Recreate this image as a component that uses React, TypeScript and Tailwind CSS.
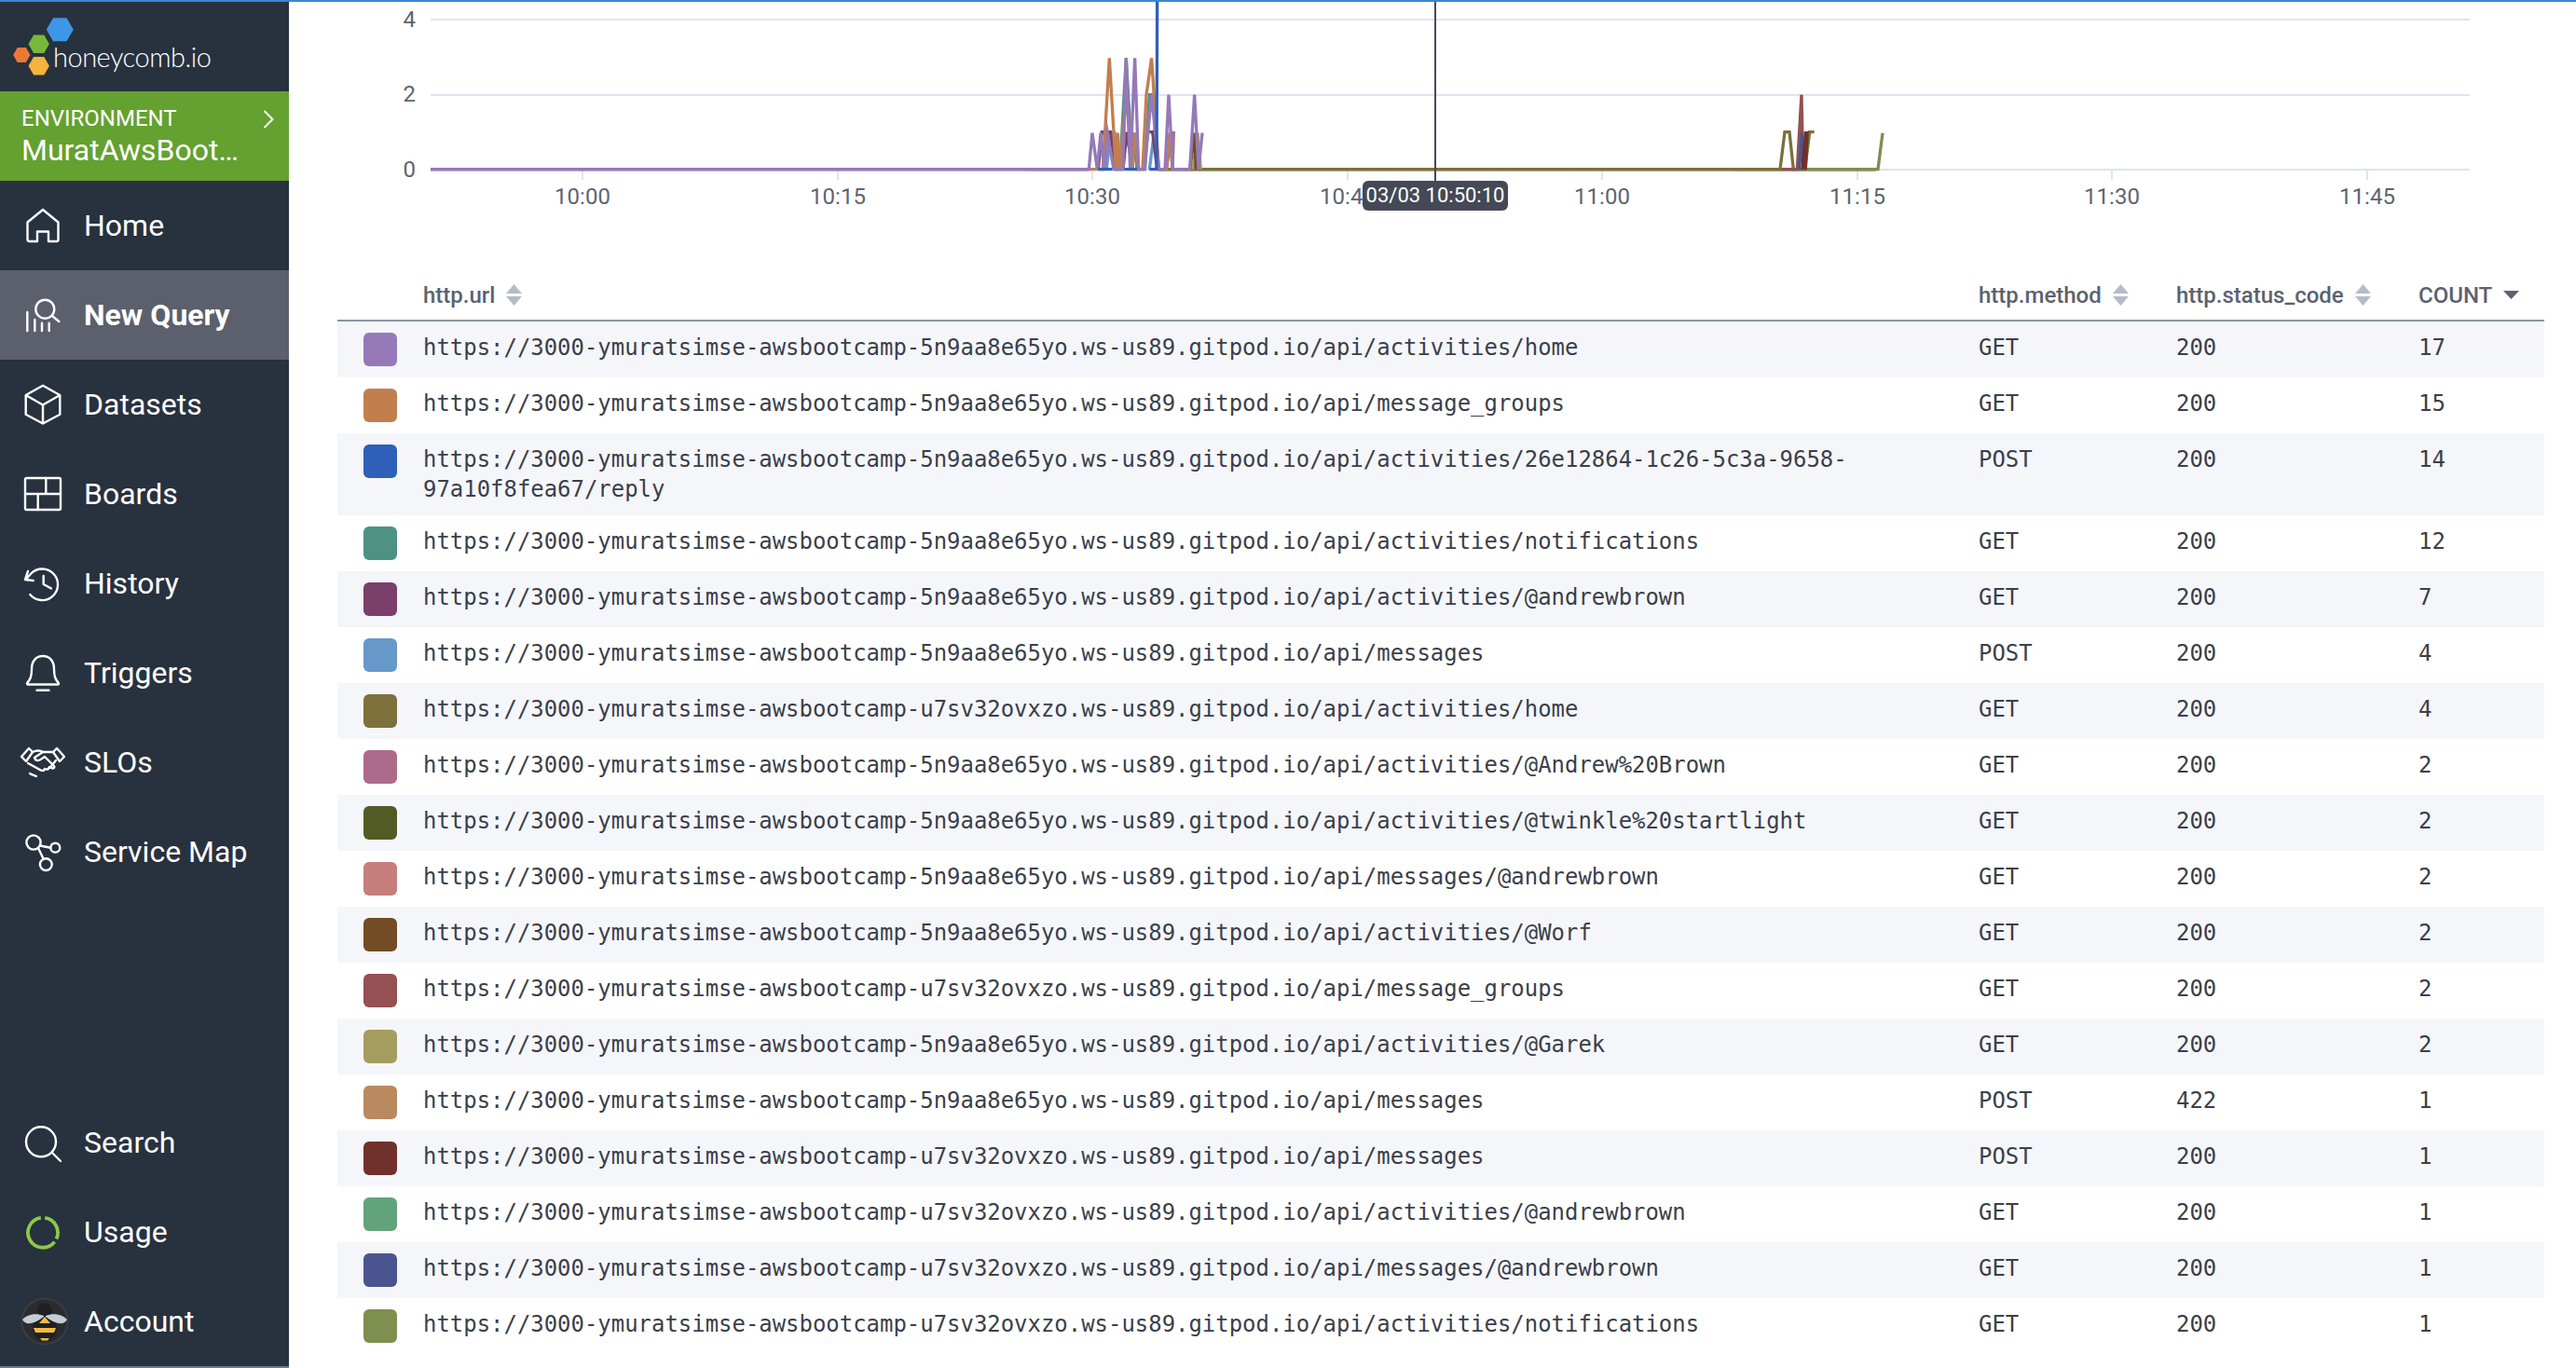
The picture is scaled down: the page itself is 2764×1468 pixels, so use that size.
import React from "react";

const A = "https://3000-ymuratsimse-awsbootcamp-5n9aa8e65yo.ws-us89.gitpod.io";
const B = "https://3000-ymuratsimse-awsbootcamp-u7sv32ovxzo.ws-us89.gitpod.io";

const rows: [string, string, string, string, string][] = [
  ["#9579b9", A + "/api/activities/home", "GET", "200", "17"],
  ["#c27f4e", A + "/api/message_groups", "GET", "200", "15"],
  ["#2f60b8", A + "/api/activities/26e12864-1c26-5c3a-9658-\n97a10f8fea67/reply", "POST", "200", "14"],
  ["#4f9283", A + "/api/activities/notifications", "GET", "200", "12"],
  ["#7a3f6b", A + "/api/activities/@andrewbrown", "GET", "200", "7"],
  ["#6698c9", A + "/api/messages", "POST", "200", "4"],
  ["#7d703b", B + "/api/activities/home", "GET", "200", "4"],
  ["#ad6b8b", A + "/api/activities/@Andrew%20Brown", "GET", "200", "2"],
  ["#535b25", A + "/api/activities/@twinkle%20startlight", "GET", "200", "2"],
  ["#c67f7b", A + "/api/messages/@andrewbrown", "GET", "200", "2"],
  ["#734c25", A + "/api/activities/@Worf", "GET", "200", "2"],
  ["#955053", B + "/api/message_groups", "GET", "200", "2"],
  ["#a59c60", A + "/api/activities/@Garek", "GET", "200", "2"],
  ["#b98960", A + "/api/messages", "POST", "422", "1"],
  ["#70302b", B + "/api/messages", "POST", "200", "1"],
  ["#62a37c", B + "/api/activities/@andrewbrown", "GET", "200", "1"],
  ["#4a5590", B + "/api/messages/@andrewbrown", "GET", "200", "1"],
  ["#7e8f50", B + "/api/activities/notifications", "GET", "200", "1"],
];

const s = { fill: "none", stroke: "white", strokeWidth: 2.4, strokeLinecap: "round" as const, strokeLinejoin: "round" as const };

function Ico({ children }: { children: React.ReactNode }) {
  return (
    <svg width="38" height="38" viewBox="0 0 38 38" className="overflow-visible" {...s}>
      {children}
    </svg>
  );
}

const HomeI = () => (
  <Ico>
    <path d="M2.5 15.5 L19 2 L35.5 15.5 V34 a2 2 0 0 1-2 2 H25 V25.5 H13 V36 H4.5 a2 2 0 0 1-2-2 Z" />
  </Ico>
);
const QueryI = () => (
  <Ico>
    <circle cx="21.3" cy="12.7" r="10" />
    <path d="M29 20 L36.3 26 M2.3 16 V36 M10.3 24 V36 M18 27.7 V36 M25.7 27.7 V36" />
  </Ico>
);
const DatasetI = () => (
  <Ico>
    <path d="M19 -1.2 L37.3 9 V29.8 L19 39.5 L0.7 29.8 V9 Z M0.7 9 L19 19.5 L37.3 9 M19 19.5 V39.5" />
  </Ico>
);
const BoardsI = () => (
  <Ico>
    <rect x="0" y="2" width="38" height="34" rx="1.5" />
    <path d="M0 19 H38 M22.3 2 V19 M13.7 19 V36" />
  </Ico>
);
const HistoryI = () => (
  <Ico>
    <path d="M3 6 L0 15 L8.7 16 M1.5 14 L6.3 8.5 A16.8 16.8 0 1 1 5.3 31" />
    <path d="M19.7 11 V20 L28 24.5" />
  </Ico>
);
const BellI = () => (
  <Ico>
    <path d="M2.8 31.5 a1 1 0 0 1 -.6-1.6 C5.5 26 7 23 7 15 C7 6 12 1 19 1 S31 6 31 15 C31 23 32.5 26 35.8 29.9 a1 1 0 0 1 -.6 1.6 Z M12.5 37.7 H25.5" />
  </Ico>
);
const ShakeI = () => (
  <svg width="48" height="32" viewBox="0 0 48 32" className="overflow-visible -ml-[5px]" {...s}>
    <path d="M9 1 L1 10 L6 15 L13 5 Z" />
    <path d="M39 1 L47 10 L42 15 L35 5 Z" />
    <path d="M13 5 C17 3 21 3 24 5 L35 5" />
    <path d="M24 5 L15 11 C16 15 20 15 23 12 L26 10 L36 20 C37 22 35 23 33 22 L31 21 C30 24 28 24 26 23 C25 26 22 25 19 23 L8 17" />
    <path d="M38 14 L33 20 M10 28 C13 30 15 30 17 31" />
  </svg>
);
const MapI = () => (
  <Ico>
    <circle cx="9" cy="9" r="7.6" />
    <circle cx="32.3" cy="14.7" r="5" />
    <circle cx="22.3" cy="32.6" r="6.4" />
    <path d="M16 12.5 L27.3 14.7 M14 15 L19.5 26.5" />
  </Ico>
);
const SearchI = () => (
  <Ico>
    <circle cx="17" cy="18.3" r="16" />
    <path d="M29 30 L38 39" />
  </Ico>
);
const UsageI = () => (
  <svg width="38" height="38" viewBox="0 0 38 38" fill="none" stroke="#8cc84b" strokeWidth="3.8">
    <path d="M21.2 3.9 A16 16 0 0 1 33.5 26.5" />
    <path d="M31.6 29.6 A16 16 0 1 1 16.8 3.9" />
  </svg>
);
const BeeI = () => (
  <svg width="52" height="52" viewBox="0 0 52 52" className="-ml-[5px]">
    <circle cx="26" cy="26" r="25.5" fill="#3a3d42" />
    <circle cx="26" cy="26" r="23.5" fill="#2b2c30" />
    <ellipse cx="26" cy="15" rx="8" ry="9" fill="#1f2024" />
    <ellipse cx="26" cy="33" rx="13" ry="14" fill="#1f2024" />
    <path d="M26 21 L32 28 H20 Z" fill="#f4b942" />
    <path d="M14 33 H38 L36 38 H16 Z" fill="#f4b942" />
    <path d="M21 44 H31 L29 46.5 H23 Z" fill="#f4b942" />
    <path d="M25 20 C16 16 6 19 2 24 C5 30 13 30 25 21 Z" fill="#c4ced6" />
    <path d="M27 20 C36 16 46 19 50 24 C47 30 39 30 27 21 Z" fill="#c4ced6" />
  </svg>
);

function NavRow({ icon, label, active }: { icon: React.ReactNode; label: string; active?: boolean }) {
  return (
    <div className={`flex h-[96px] items-center ${active ? "bg-[#5b606c]" : ""}`}>
      <div className="flex w-[90px] shrink-0 items-center pl-[27px]">{icon}</div>
      <span className={`text-[32px] leading-none text-white ${active ? "font-bold" : "font-normal"}`}>{label}</span>
    </div>
  );
}

function Hex({ cx, cy, r, fill }: { cx: number; cy: number; r: number; fill: string }) {
  const h = r * 0.866;
  const d = `M${cx - r} ${cy} L${cx - r / 2} ${cy - h} L${cx + r / 2} ${cy - h} L${cx + r} ${cy} L${cx + r / 2} ${cy + h} L${cx - r / 2} ${cy + h} Z`;
  return <path d={d} fill={fill} />;
}

function SortIcon({ active }: { active?: boolean }) {
  if (active) {
    return (
      <svg width="17" height="10" viewBox="0 0 17 10" className="ml-[12px] inline-block">
        <path d="M0 0 H17 L8.5 9 Z" fill="#5a6270" />
      </svg>
    );
  }
  return (
    <svg width="17" height="24" viewBox="0 0 17 24" className="ml-[12px] inline-block">
      <path d="M8.5 0 L17 10 H0 Z" fill="#b4bcc9" />
      <path d="M0 13 H17 L8.5 23 Z" fill="#b4bcc9" />
    </svg>
  );
}

const ticks: [number, string][] = [
  [625, "10:00"], [899, "10:15"], [1172, "10:30"], [1446, "10:45"],
  [1719, "11:00"], [1993, "11:15"], [2266, "11:30"], [2540, "11:45"],
];

function Chart() {
  const L = (p: { d: string; c: string }) => (
    <path key={p.d} d={p.d} stroke={p.c} fill="none" strokeWidth="10" strokeLinejoin="miter" strokeMiterlimit="8" />
  );
  return (
    <svg viewBox="310 2 2454 278" width="2454" height="278" className="block font-['Roboto',sans-serif]">
      {[21, 102, 182].map((y) => (
        <rect key={y} x="462" y={y - 1} width="2188" height="2" fill="#e0e4ef" />
      ))}
      {ticks.map(([x]) => (
        <rect key={x} x={x - 1} y="183" width="2" height="10" fill="#e0e4ef" />
      ))}
      {ticks.map(([x, t]) => (
        <text key={t} x={x} y="218.5" textAnchor="middle" fontSize="24" fill="#5d6472">{t}</text>
      ))}
      <text x="446" y="28.5" textAnchor="end" fontSize="24" fill="#5d6472">4</text>
      <text x="446" y="109" textAnchor="end" fontSize="24" fill="#5d6472">2</text>
      <text x="446" y="189.5" textAnchor="end" fontSize="24" fill="#5d6472">0</text>
      <rect x="462" y="180" width="706" height="3.6" fill="#9579b9" />
      <rect x="1243" y="180" width="770" height="3.6" fill="#7d703b" />
      <g transform="translate(1100 0) scale(0.33333)">
        {[
          { c: "#a59c60", d: "M345 545 L352 428 L360 545 M540 545 L555 428 L565 545" },
          { c: "#734c25", d: "M530 545 L545 428 L550 545" },
          { c: "#ad6b8b", d: "M455 545 L470 428 L478 428 L474 545" },
          { c: "#6698c9", d: "M262 545 L275 428 L288 428 L298 545 M400 545 L415 428 L430 545" },
          { c: "#7a3f6b", d: "M235 545 L247 425 L275 425 L290 545 L315 545 L327 425 L345 545 M380 545 L395 425 L410 425 L425 545" },
          { c: "#4f9283", d: "M290 545 L305 545 L325 187 L345 545 L350 428 L360 545 L385 545 L400 305 L410 305 L430 545" },
          { c: "#c27f4e", d: "M205 545 L250 545 L271 187 L292 545 L298 428 L305 545 L325 305 L345 545 L352 428 L365 545 L378 545 L390 305 L407 187 L430 545 L455 545 L462 428 L475 545" },
          { c: "#9579b9", d: "M0 545 L205 545 L216 428 L232 545 L243 428 L255 545 L265 428 L285 545 L315 545 L325 187 L338 545 L353 187 L365 545 L385 545 L395 428 L407 305 L430 545 L450 545 L462 305 L475 545 L530 545 L545 305 L558 545 L570 428" },
          { c: "#2f60b8", d: "M235 545 H280 M320 545 H360 M400 545 H423 L425 6" },
        ].map(L)}
      </g>
      <g transform="translate(1860 0) scale(0.33333)">
        {[
          { c: "#7e8f50", d: "M235 545 H465 L480 428" },
          { c: "#7d703b", d: "M0 545 H150 L165 425 L180 425 L193 545 H230 L245 425 L260 425" },
          { c: "#955053", d: "M155 545 H205 L219 305 L224 545" },
          { c: "#4a5590", d: "M212 545 L220 428 L225 545" },
          { c: "#70302b", d: "M222 545 L232 428 L237 428 L232 545" },
        ].map(L)}
      </g>
      <rect x="1539" y="2" width="2" height="192" fill="#444955" />
    </svg>
  );
}

export default function App() {
  return (
    <div className="flex h-[1468px] w-full flex-col overflow-hidden bg-white font-['Roboto',sans-serif]">
      <div className="h-[2px] shrink-0 bg-[#3a87d6]" />
      <div className="flex min-h-0 flex-1">
        <aside className="flex w-[310px] shrink-0 flex-col border-b-2 border-[#6e7a8a] bg-[#28313e]">
          <div className="flex h-[96px] shrink-0 items-start">
            <svg width="57" height="96" viewBox="0 2 57 96" className="shrink-0 overflow-visible">
              <Hex cx={64.3} cy={31.7} r={14.5} fill="#3d96e6" />
              <Hex cx={41.7} cy={47.3} r={11.2} fill="#79b83a" />
              <Hex cx={23.3} cy={59} r={9.2} fill="#eb7835" />
              <Hex cx={41.7} cy={70.7} r={11.2} fill="#f6b33e" />
            </svg>
            <span className="mt-[41px] text-[29px] font-light leading-[36px] tracking-[-0.5px] text-white font-['Lato',sans-serif]">honeycomb.io</span>
          </div>
          <div className="flex h-[96px] shrink-0 items-start justify-between bg-[#64a130] pl-[23px] pr-[16px] pt-[14px] text-white">
            <div className="flex flex-col">
              <span className="text-[24px] leading-[30px]">ENVIRONMENT</span>
              <span className="mt-[1px] text-[32px] leading-[36px]">MuratAwsBoot…</span>
            </div>
            <svg width="12" height="20" viewBox="0 0 12 20" fill="none" stroke="white" strokeWidth="2" className="mt-[6px]">
              <path d="M1.5 1 L10.5 10 L1.5 19" />
            </svg>
          </div>
          <NavRow icon={<HomeI />} label="Home" />
          <NavRow icon={<QueryI />} label="New Query" active />
          <NavRow icon={<DatasetI />} label="Datasets" />
          <NavRow icon={<BoardsI />} label="Boards" />
          <NavRow icon={<HistoryI />} label="History" />
          <NavRow icon={<BellI />} label="Triggers" />
          <NavRow icon={<ShakeI />} label="SLOs" />
          <NavRow icon={<MapI />} label="Service Map" />
          <div className="flex-1" />
          <NavRow icon={<SearchI />} label="Search" />
          <NavRow icon={<UsageI />} label="Usage" />
          <NavRow icon={<BeeI />} label="Account" />
        </aside>
        <main className="relative min-w-0 flex-1">
          <Chart />
          <div className="absolute left-[1152px] top-[192px] flex h-[32px] w-[156px] items-center justify-center whitespace-nowrap rounded-[6px] bg-[#444955] text-[22px] leading-none text-white">
            03/03 10:50:10
          </div>
          <table className="ml-[52px] w-[2368px] table-fixed border-collapse text-left">
            <colgroup>
              <col className="w-[92px]" />
              <col className="w-[1669px]" />
              <col className="w-[212px]" />
              <col className="w-[260px]" />
              <col className="w-[135px]" />
            </colgroup>
            <thead>
              <tr className="h-[64px] border-b-2 border-[#8a94a4] text-[24px] text-[#5a6270]">
                <th />
                <th className="pt-[10px] font-medium"><span className="inline-flex items-center">http.url<SortIcon /></span></th>
                <th className="pt-[10px] font-medium"><span className="inline-flex items-center">http.method<SortIcon /></span></th>
                <th className="pt-[10px] font-medium"><span className="inline-flex items-center">http.status_code<SortIcon /></span></th>
                <th className="pt-[10px] font-medium"><span className="inline-flex items-center">COUNT<SortIcon active /></span></th>
              </tr>
            </thead>
            <tbody className="font-['DejaVu_Sans_Mono',monospace] text-[23.94px] leading-[32px] text-[#3a3f4a]">
              {rows.map((r, i) => (
                <tr key={i} className={i % 2 === 0 ? "bg-[#f5f6fa]" : "bg-white"}>
                  <td className="py-[12px] pl-[28px] align-top">
                    <div className="h-[36px] w-[36px] rounded-[6px]" style={{ backgroundColor: r[0] }} />
                  </td>
                  <td className="whitespace-pre-wrap py-[12px] align-top">{r[1]}</td>
                  <td className="py-[12px] align-top">{r[2]}</td>
                  <td className="py-[12px] align-top">{r[3]}</td>
                  <td className="py-[12px] align-top">{r[4]}</td>
                </tr>
              ))}
            </tbody>
          </table>
        </main>
      </div>
    </div>
  );
}
